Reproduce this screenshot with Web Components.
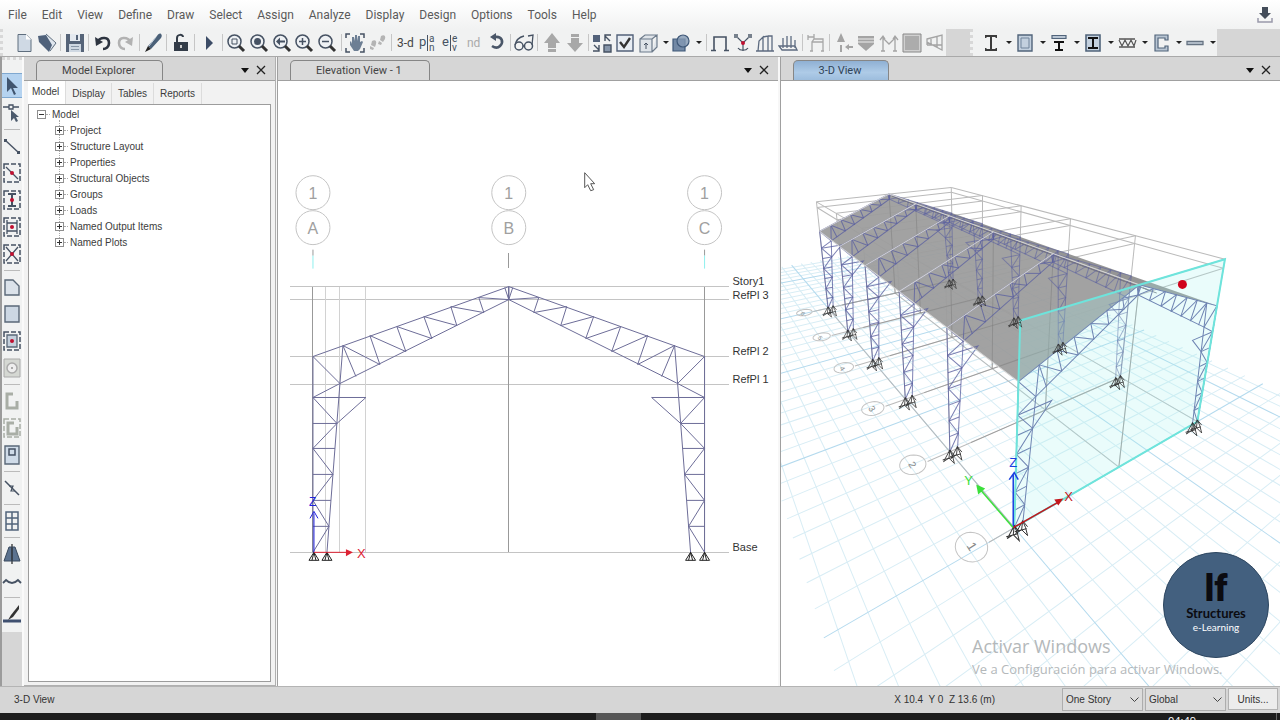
<!DOCTYPE html>
<html lang="en">
<head>
<meta charset="utf-8">
<title>Structural modeler</title>
<style>
html,body{margin:0;height:100%;background:#d6d6d6}
body{font-family:Roboto,"Liberation Sans",sans-serif;font-size:11px;color:#444;overflow:hidden}
</style>
</head>
<body>
<model-app></model-app>
<script>
const BASE = `*{box-sizing:border-box}button,select{font:inherit;color:inherit;margin:0;padding:0;border:0;background:none;border-radius:0}`;
function define(name, css, html) {
  const t = document.createElement('template');
  customElements.define(name, class extends HTMLElement {
    constructor() {
      super();
      this.attachShadow({ mode: 'open' });
    }
    connectedCallback() {
      if (this.shadowRoot.childNodes.length) return;
      t.innerHTML = `<style>${BASE}${css}</style>${typeof html === 'function' ? html(this) : html}`;
      this.shadowRoot.append(t.content.cloneNode(true));
    }
  });
}

/* ---------- icons, 20 x 20 ---------- */
const D = '#465263', M = '#9fb0c2', G = '#a8a8a8';
const s = (d, c = D, w = 1.5, f = 'none') => `<path d="${d}" fill="${f}" stroke="${c}" stroke-width="${w}"/>`;
const f = (d, c = D) => `<path d="${d}" fill="${c}"/>`;
const txt = (x, y, t, z = 12, c = D) => `<text x="${x}" y="${y}" font-size="${z}" fill="${c}">${t}</text>`;
const lens = `<circle cx="8.5" cy="8.5" r="6.5" fill="#eef1f4" stroke="${D}" stroke-width="1.5"/>` + s('M13 13l5 5', '#333', 3);
const dash = `<rect x="2" y="1" width="16" height="18" fill="none" stroke="${D}" stroke-width="1.5" stroke-dasharray="5 2"/>`;
const red = `<circle cx="10" cy="10" r="2" fill="#c01030"/>`;
const ICONS = {
  new: s('M4 1.5h8l5 5V18.5H4z', '#5f6e7e', 1, '#cfd9e4') + f('M12 1.5v5h5z', '#fff'),
  open: f('M1 3l9-2 9 10-6 8z', '#dfe6ee') + f('M1 3l8-1 6 10-3 7L2 9z', '#4f617a') + s('M9 1l10 9-6 8', '#5f6e7e', 1),
  save: f('M1 1h18v18H1z', '#566478') + f('M5 1h10v7H5z', '#e5eaf0') + f('M11 2h2v5h-2z', '#566478') + f('M4 11h12v8H4z', '#cfd8e2') + s('M6 13.5h8M6 16.5h8', '#8896a6', 1),
  undo: s('M4 9c4-6 12-5 12 1 0 4-3 6-6 6', '#2d3440', 2.6) + f('M2 4l1 9 7-4z', '#2d3440'),
  redo: s('M16 9c-4-6-12-5-12 1 0 4 3 6 6 6', '#b2b2b2', 2.6) + f('M18 4l-1 9-7-4z', '#b2b2b2'),
  pencil: f('M18 1c1 1 1 2 0 4L8 16l-3-3L14 3c1-2 3-3 4-2z', '#4a6078') + f('M5 13l3 3-6 3z', '#222') + s('M13 4L6 13', '#c4d0dc', 1),
  lock: f('M3 9h14v9H3z', '#333c48') + s('M6 9V5c0-4 6-4 6-1', '#333c48', 2) + f('M9 12h2v3H9z', '#ccc'),
  play: f('M7 3l7 7-7 7z', '#3c4c66'),
  zfit: lens + s('M6 6h5v5H6z', D, 1),
  zwin: lens + `<circle cx="8.5" cy="8.5" r="3.5" fill="${D}"/>`,
  zback: lens + f('M4 8.5l4-4v3h5v2H8v3z'),
  zin: lens + s('M5 8.5h7M8.5 5v7'),
  zout: lens + s('M5 8.5h7'),
  pan: s('M1 5V1h4M15 1h4v4M19 15v4h-4M5 19H1v-4') + f('M5 9l1-1 1 3V4h2l1 4V2h2v6l1-5h2v6l2-1 1 1-3 7-2 2H9l-4-6z', '#6d7f94'),
  walk: f('M13 3c3-2 5 0 4 3l-2 3-3-2zM11 8l3 2-1 2-3-1zM4 8c3-2 5 0 4 3l-1 3-4-2zM2 13l4 2-1 2-3-1z', '#b4b4b4'),
  plan: txt(1, 13, 'p', 13) + s('M9.5 2v16', D, 1) + txt(11, 9, 'a', 10) + txt(11, 18, 'n', 10),
  elev: txt(1, 13, 'e', 13) + s('M9.5 2v16', D, 1) + txt(11, 9, 'e', 10) + txt(11, 18, 'v', 10),
  rot: s('M9 4c7-1 9 5 5 9-2 2-5 2-8 0', '#4a5668', 2.6) + f('M10 0v8L4 4z', '#4a5668'),
  glass: `<circle cx="5" cy="13" r="4" fill="none" stroke="${D}" stroke-width="1.5"/><circle cx="14.5" cy="13" r="4" fill="none" stroke="${D}" stroke-width="1.5"/>` + s('M1 12C2 7 6 4 10 3M9 13h2M18 12l1-10-5 1', D, 1.3),
  up: f('M10 0l8 10h-4v5H6v-5H2zM6 16h8v3H6z', G),
  down: f('M10 19l8-9h-4V5H6v5H2zM6 1h8v3H6z', G),
  quad: f('M1 2h7v7H1z', '#53627a') + f('M12 12h7v7h-7z', '#8796aa') + s('M12 12h7v7h-7zM18 8l-5-5M13 8V2h6M2 12l5 5M7 12v6H1', D, 1.4),
  check: s('M2 2h16v16H2z', '#53627a', 1.4, '#e8edf3') + s('M5 9l4 5 6-9', '#333', 2.4),
  cube: s('M2 6h12v13H2zM2 6l5-4h12l-5 4M19 2v12l-5 5', '#6d7b8b', 1.2, '#dfe4e9') + s('M8 10v6M6 12l2-2 2 2', D, 1),
  solid: s('M2 6h12v12H2z', '#3f5878', 1.2, '#7389a5') + `<circle cx="12" cy="8" r="6" fill="#8399b3" fill-opacity=".8" stroke="#3f5878" stroke-width="1.2"/>`,
  portal: s('M4 17V4h12v13', D, 1.6) + s('M1 17.5h5M14 17.5h5', D, 1.4),
  joint: s('M3 3l7 7 7-7M10 10v8M5 15c2 3 8 3 10 0', D, 1.2) + f('M1 1h4v4H1zM15 1h4v4h-4z', '#77818d') + red,
  load1: s('M1 18h18M3 18l1-10 4-4v14M8 4l5-1v15M13 3h4v15', '#5d6b80', 1.3),
  load2: s('M1 13h16l2 4H4zM5 15V5M9 15V3M13 15V3M17 15V7', '#5d6b80', 1.3),
  dframe: s('M6 18V9h11v9M2 2v5M2 4h6M8 1v5M6 9l2-3h9v12M4 18h3M15 18h3', G, 1.3),
  dcone: f('M7 0l4 9H3zM6 12h2v7H6zM11 14l4-3v6zM14 13h5v2h-5z', '#a4a4a4'),
  dshield: f('M2 3h16v8l-8 7-8-7z', '#a4a4a4') + s('M2 6h16M2 9h16', '#eee', 1),
  dmom: s('M4 18V5l6 6 6-6v13M1 7l3-4 2 3M19 7l-3-4-2 3M2 18h4M14 18h4', '#a4a4a4', 1.3),
  dplate: s('M1 1h18v18H1z', '#888', 1, '#d0d0d0') + f('M3 3h14v14H3z', '#acacac'),
  dmesh: s('M2 6l15-4v15L2 9zM2 12h15M2 6v6M6 5v6M12 4v10', '#a4a4a4', 1.3),
  ibeam: f('M4 2h12v3h-1l-1-1h-3v12h3l1-1h1v3H4v-3h1l1 1h3V4H6L5 5H4z', '#3c3c3c'),
  plate: s('M3 2h14v16H3z', '#51647b', 1.4, '#c3d0de') + s('M6 5h8v10H6z', '#71849b', 1),
  tee: s('M3 2.5h14v3H3z', '#51647b', 1.2, '#b8c5d3') + f('M5 8h10v2h-4v6h3v2H6v-2h3v-6H5z', '#111'),
  boxi: s('M3 2h14v16H3z', '#51647b', 1.6, '#c3d0de') + f('M5 4h10v2h-4v8h4v2H5v-2h4V6H5z', '#111'),
  truss: s('M2 6h16M2 14h16', '#555', 1.4) + s('M2 7l3 6 3-6 3 6 3-6 3 6 2-6', '#555', 1.2),
  chan: s('M17 2v5h-3V5H7v10h7v-2h3v5H4V2z', '#51647b', 1.2, '#b8c5d3'),
  bar: s('M2 8.5h16v3H2z', '#667382', 1.3, '#c9d2dc'),
  arrow: f('M5 1v15l4-4 3 7 2-1-3-6h5z', '#41556f'),
  reshape: s('M1 4h6M11 4h6M7 2h4v4H7z', D, 1.3) + f('M9 7v11l3-3 2 4 2-1-2-4h3z', '#4c5b6d'),
  line: s('M3 4l14 13', D, 1.4) + f('M2 3h3v3H2zM15 15h3v3h-3z'),
  qline: dash + s('M4 4l12 12', D, 1.3) + red,
  qcol: dash + s('M6 4h8M10 4v12M6 16h8', D, 2) + red,
  qbeam: dash + s('M5 3v14M15 3v14M5 6h10M5 14h10', D, 1.3) + red,
  qbrace: dash + s('M4 3l12 14M16 3L4 17', D, 1.3) + red,
  poly: s('M3 3h8l6 6v9H3z', '#5a6878', 1.4, '#dbe2ea'),
  rect: s('M3 2h14v16H3z', '#5a6878', 1.4, '#ccd7e3'),
  qrect: dash + s('M5 4h10v12H5z', '#5a6878', 1.3, '#c5d0dc') + red,
  dcirc: s('M2 1h16v18H2z', '#aaa', 1, '#d5d8d3') + `<circle cx="10" cy="10" r="5" fill="#eee" stroke="#aaa" stroke-width="1.5"/>` + f('M9 9h2v2H9z', '#aaa'),
  wall: s('M11 3H5v14h10V10', '#a9aea6', 3),
  qwall: `<rect x="2" y="1" width="16" height="18" fill="none" stroke="#a9aea6" stroke-width="1.5" stroke-dasharray="5 2"/>` + s('M12 5H6v11h9v-7', '#a9aea6', 3),
  open2: s('M3 1h14v18H3z', '#5a6878', 1.4, '#cfdbe8') + s('M7 4h6v6H7z', D, 1.5),
  link: s('M3 3l14 14', D, 1.5) + s('M7 8h4l-2 5h4', D, 1.2),
  grid: s('M4 1h12v18H4zM10 1v18M4 7h12M4 13h12', '#51647b', 1.5),
  tower: f('M7 3h6l5 14H2z', '#5c7390') + s('M10 0v20', '#222', 1.2) + s('M7 3h6l5 14H2z', '#38485c', 1),
  tendon: s('M1 12l3-3c4 4 8 4 12 0l3 3', D, 1.8),
  draw: s('M1 17h18', '#3f5070', 3) + f('M17 1L9 11l-3 5 5-3 6-8z', '#333'),
};
define('ui-icon', `:host{display:block;width:20px;height:20px}svg{display:block;width:100%;height:100%;font-family:Roboto,sans-serif}`,
  el => `<svg viewBox="0 0 20 20" aria-hidden="true">${ICONS[el.getAttribute('name')] || ''}</svg>`);

define('tool-button', `:host{display:flex;flex:0 1 23px;min-width:0;align-items:center;justify-content:center}
:host([drop]){flex-basis:34px}
:host([text]) button{font-size:12px}
:host([dim]){color:#aaa}
button{width:100%;height:100%;display:flex;align-items:center;justify-content:center;gap:5px;white-space:nowrap}
.d{width:0;height:0;border:3px solid transparent;border-top-color:#222;border-bottom:0}
:host([on]) button{background:#b5d3f0;border-top:1px solid #7fa8d0;border-bottom:1px solid #7fa8d0}`,
  el => `<button aria-label="${el.getAttribute('label') || el.getAttribute('icon')}">${el.hasAttribute('text') ? '<slot></slot>' : `<ui-icon name="${el.getAttribute('icon')}"></ui-icon>`}${el.hasAttribute('drop') ? '<span class="d"></span>' : ''}</button>`);

define('menu-bar', `:host{display:flex;justify-content:space-between;align-items:center;height:29px;padding:0 7px 0 8px;background:linear-gradient(#fff,#f1f2f2)}
nav{display:flex;gap:15px;font-size:12px;color:#5a5a5a}svg{width:16px;height:18px;display:block}`,
  `<nav>${'File,Edit,View,Define,Draw,Select,Assign,Analyze,Display,Design,Options,Tools,Help'.split(',').map(m => `<button>${m}</button>`).join('')}</nav>
  <button aria-label="Download"><svg viewBox="0 0 16 18"><path d="M5 1h6v6h3l-6 6-6-6h3z" fill="#444d5a"/><path d="M1 12v4h14v-4" fill="none" stroke="#99a" stroke-width="1.5"/></svg></button>`);

const bar = list => list.trim().split(/\s+/).map(n => {
  if (n === '|') return '<i></i>';
  if (n === '3-d') return '<tool-button text label="3-D view">3-d</tool-button>';
  if (n === 'nd') return '<tool-button text dim label="nd">nd</tool-button>';
  return n.endsWith('+') ? `<tool-button drop icon="${n.slice(0, -1)}"></tool-button>` : `<tool-button icon="${n}"></tool-button>`;
}).join('');
define('tool-bars', `:host{display:flex;height:28px;gap:24px;background:#d6d6d6;border-bottom:1px solid #a9a9a9}
div{display:flex;min-width:0;background:#f1f2f2}
.a{flex:0 1 946px}.b{flex:0 1 247px}
.a::before,.b::before{content:"";flex:0 0 10px;border-left:3px dotted #d8d8d8}
.b::before{flex-basis:6px}
i{flex:0 0 1px;margin:5px 2px;background:#c6c6c6}`,
  `<div class="a" role="toolbar" aria-label="Main">${bar('new open | save | undo redo | pencil | lock | play | zfit zwin zback zin zout | pan walk | 3-d plan elev nd rot | glass | up down | quad check cube+ solid+ | portal joint load1 load2 | dframe | dcone dshield dmom dplate dmesh')}</div>
   <div class="b" role="toolbar" aria-label="Sections">${bar('ibeam+ plate+ tee+ boxi+ truss+ chan+ bar+')}</div>`);

define('draw-bar', `:host{display:block;flex:0 0 24px;background:#d6d6d6;border-left:2px solid #9b9b9b;border-right:2px solid #fafafa}
div{background:#f1f2f2;display:flex;flex-direction:column;padding-bottom:5px}
div::before{content:"";height:12px;border-top:3px dotted #d8d8d8}
tool-button{flex:0 0 27px;padding:1px 0}
i{flex:0 0 1px;margin:3px 2px 2px;background:#bbb}`,
  `<div role="toolbar" aria-label="Draw">${bar('arrow reshape | line qline qcol qbeam qbrace | poly rect qrect dcirc | wall qwall open2 | link | grid | tower tendon | draw').replace('<tool-button', '<tool-button on')}</div>`);

define('view-pane', `:host{display:flex;flex-direction:column;min-width:0;min-height:0;background:#fff}
header{flex:0 0 24px;display:flex;align-items:flex-end;background:#d6d6d6;border-bottom:1px solid #a0a0a0}
h2{margin:0 0 0 12px;height:20px;line-height:19px;padding:0 27px 0 25px;font-size:11px;font-weight:400;color:#444;background:#dadada;border:1px solid #868686;border-bottom:0;border-radius:5px 5px 0 0}
:host([active]) h2{background:linear-gradient(#8fb0d3,#aecbe7 60%,#9dbddd);color:#2f4256}
span{flex:1}
button{width:16px;height:20px;display:flex;align-items:center;justify-content:center}
button:last-child{margin-right:6px}
svg{display:block;width:10px;height:10px}
main{flex:1;min-height:0;position:relative;display:flex;flex-direction:column}`,
  el => `<header><h2>${el.getAttribute('title')}</h2><span></span>
  <button aria-label="Options"><svg viewBox="0 0 10 10"><path d="M1 3h8L5 8z" fill="#111"/></svg></button>
  <button aria-label="Close"><svg viewBox="0 0 10 10"><path d="M1 1l8 8M9 1L1 9" stroke="#222" stroke-width="1.3"/></svg></button></header><main><slot></slot></main>`);

define('model-tree', `:host{flex:1;display:flex;flex-direction:column;background:#f2f2f2;padding:0 4px 3px;font:10px "Liberation Sans",sans-serif;color:#3c3c3c}
nav{display:flex;height:23px;align-items:flex-end}
nav button{height:21px;padding:0 6px;border-right:1px solid #dcdcdc}
nav button:first-child{background:#fff;height:23px;padding:0 6px 3px 4px}
section{flex:1;background:#fff;border:1px solid #9c9c9c;padding:1px 8px}
ul{list-style:none;margin:0;padding:0}
ul ul{margin-left:18px;position:relative}
ul ul::before{content:"";position:absolute;left:4px;top:-2px;height:122px;border-left:1px dotted #aaa}
li div{display:flex;align-items:center;height:16px;position:relative}
li button{width:9px;height:9px;border:1px solid #8f8f8f;background:#fff;display:block}
svg{display:block;width:7px;height:7px}
li span{display:flex;align-items:center}
li span::before{content:"";width:4px;margin:0 2px 0 0;border-top:1px dotted #aaa}`,
  () => {
    const row = (t, open) => `<div><button aria-label="Toggle ${t}"><svg viewBox="0 0 7 7"><path d="${open ? 'M1 3.5h5' : 'M1 3.5h5M3.5 1v5'}" stroke="#333"/></svg></button><span>${t}</span></div>`;
    return `<nav>${['Model', 'Display', 'Tables', 'Reports'].map(t => `<button>${t}</button>`).join('')}</nav><section><ul><li>${row('Model', true)}<ul>${
      ['Project', 'Structure Layout', 'Properties', 'Structural Objects', 'Groups', 'Loads', 'Named Output Items', 'Named Plots'].map(t => `<li>${row(t)}</li>`).join('')}</ul></li></ul></section>`;
  });

/* ---------- portal frame, in elevation drawing units ---------- */
const CX = 509, X0 = 313, X1 = 705, ZB = 553, ZT = 287;
const T = [[343, 346], [370, 336], [397, 327], [424, 317], [451, 307], [479, 298]];
const B = [[356, 377], [380, 365], [406, 352], [432, 339], [457, 326], [484, 313]];
const half = [
  [[X0, ZB], [X0, 357], [CX, ZT]],
  [[327, ZB], [340, 384], [343, 346]],
  [[X0, 398], [340, 384], [CX, 300], [CX, ZT]],
  [[X0, 357], [340, 384]],
  [[X0, 398], [366, 398], [337, 424], [X0, 398]],
  [[337, 424], [X0, 449], [333, 475], [X0, 501], [329, 527], [X0, ZB]],
  [[X0, 424], [337, 424]], [[X0, 449], [335, 449]], [[X0, 475], [333, 475]], [[X0, 501], [331, 501]], [[X0, 527], [329, 527]],
  [[505, 288], [CX, 300]],
  ...T.map((p, i) => [p, B[i]]),
  ...T.map((p, i) => [p, B[i + 1] || [CX, 300]]),
];
const mirror = l => l.map(([x, y]) => [2 * CX - x, y]);
const poly = (pts, extra = '') => `<polyline points="${pts.map(p => p.map(n => n.toFixed(1)).join()).join(' ')}" ${extra}/>`;

define('elevation-canvas', `:host{flex:1;min-height:0;display:block}svg{display:block;width:100%;height:100%;font-family:"Liberation Sans",sans-serif}`, () => {
  const ln = (a, b, c, d) => `<path d="M${a} ${b}L${c} ${d}"/>`;
  let g = '';
  for (const y of [287, 300, 357, 385, 553]) g += ln(290, y, 729, y);
  let v = '';
  for (const x of [326, 340, 366]) v += ln(x, 287, x, 553);
  const dk = ln(X0, 287, X0, 553) + ln(CX, 253, CX, 268) + ln(CX, 287, CX, 553) + ln(X1, 287, X1, 553);
  let bub = '';
  [[X0, 'A'], [CX, 'B'], [X1, 'C']].forEach(([x, t]) => {
    bub += `<circle cx="${x}" cy="193" r="17"/><circle cx="${x}" cy="228" r="17"/><text x="${x}" y="199">1</text><text x="${x}" y="234">${t}</text>`;
  });
  const sup = x => `<path d="M${x} 553l-5 8h10zM${x - 2} 561l2-8 2 8"/>`;
  return `<svg viewBox="278 82 500 604" preserveAspectRatio="xMidYMid meet" role="img" aria-label="Elevation of portal frame">
  <g stroke="#c4c4c4" fill="none" shape-rendering="crispEdges">${g}</g><g stroke="#d2d2d2" shape-rendering="crispEdges">${v}</g>
  <g stroke="#999" shape-rendering="crispEdges">${dk}</g>
  <path d="M313 250v6M705 250v6" stroke="#999"/><path d="M313 256v13M705 256v13" stroke="#8ff0ee"/>
  <g stroke="#c4c4c4" fill="none">${bub.replace(/<text/g, '<text fill="#a0a0a0" stroke="none" font-size="16" text-anchor="middle"')}</g>
  <g stroke="#6c6c98" fill="none">${half.map(l => poly(l) + poly(mirror(l))).join('')}</g>
  <g stroke="#222" fill="none">${[314, 327, 691, 705].map(sup).join('')}</g>
  <path d="M314 553V514M310 519l4-7 4 7" stroke="#2222dd" fill="none"/><path d="M314 553h34" stroke="#d23" fill="none"/><path d="M346 550l7 3-7 4z" fill="#d23"/>
  <text x="309" y="507" font-size="12" fill="#2222dd">Z</text><text x="357" y="559" font-size="13" fill="#d23">X</text>
  <g font-size="11" fill="#333"><text x="733" y="285">Story1</text><text x="733" y="299">RefPl 3</text><text x="733" y="355">RefPl 2</text><text x="733" y="384">RefPl 1</text><text x="733" y="552">Base</text></g>
  <path d="M585 173v15l3-3 3 6 3-1-3-6h4z" fill="#fff" stroke="#555"/></svg>`;
});

/* ---------- perspective view ---------- */
/* x, y, z run 0..1 over the span, the length and the storey height */
const P = (x, y, z) => {
  const w = 1 + 0.332 * x + 1.114 * y - 0.15 * z;
  return [(1014 + 580.3 * x + 736.4 * y - 147 * z) / w, (527 + 33.9 * x + 123.7 * y - 255 * z) / w, w];
};
const pl = pts => poly(pts.map(p => P(...p).slice(0, 2)));
const area = (pts, extra) => `<polygon points="${pts.map(p => P(...p).slice(0, 2).map(n => n.toFixed(1)).join()).join(' ')}" ${extra}/>`;

define('space-canvas', `:host{flex:1;min-height:0;display:block}svg{display:block;width:100%;height:100%;font-family:"Liberation Sans",sans-serif}`, () => {
  const unit = ([x, z]) => [(x - X0) / (X1 - X0), (ZB - z) / (ZB - ZT)];
  const frame = (y, lines) => lines.map(l => pl(l.map(p => { const [a, b] = unit(p); return [a, y, b]; }))).join('');
  const eave = (ZB - 357) / (ZB - ZT);
  let minor = '', major = '';
  for (let i = -7; i <= 18; i++) { const t = pl([[i / 12, -.5, 0], [i / 12, 1.53, 0]]); i % 8 ? minor += t : major += t; }
  for (let j = -12; j <= 36; j++) { const t = pl([[-.62, j / 24, 0], [1.54, j / 24, 0]]); j % 8 ? minor += t : major += t; }
  const Y = [0, .2, .4, .6, .8, 1];
  let lines = '', sup = '', bub = '', cols = '', caps = '';
  for (const x of [0, .5, 1]) lines += pl([[x, 0, 0], [x, 1, 0]]);
  for (const x of [0, 1]) for (const z of [1, .95]) lines += pl([[x, 0, z], [x, 1, z]]);
  Y.forEach((y, i) => {
    lines += pl([[-.1, y, 0], [1, y, 0]]) + pl([[0, y, 1], [1, y, 1]]) + pl([[0, y, .95], [1, y, .95]]);
    for (const x of [0, .5, 1]) lines += pl([[x, y, 0], [x, y, 1]]);
    for (const x of [0, .035, .965, 1]) {
      const [a, b, w] = P(x, y, 0), k = 1 / Math.sqrt(w);
      sup += `<path transform="translate(${a.toFixed(1)} ${b.toFixed(1)}) scale(${k.toFixed(2)})" d="M0-2l-7 13 6-4 6 6-2-8zM0-2l-1 9M-8 9l12-3M0-2l5 6"/>`;
    }
    const ring = [], cy = y + .008;
    for (let a = 0; a <= 24; a++) ring.push([-.155 + .05 * Math.cos(a * Math.PI / 12), cy + .025 * Math.sin(a * Math.PI / 12), 0]);
    bub += pl(ring);
    const [bx, by, bw] = P(-.155, cy, 0);
    bub += `<text x="0" y="4" text-anchor="middle" font-size="${Math.round(12 / bw)}" fill="#888" stroke="none" transform="translate(${bx.toFixed(1)} ${by.toFixed(1)}) rotate(58)">${i + 1}</text>`;
    cols += `<g stroke-opacity="${i ? .8 : 1}">${frame(y, half)}</g><g stroke-opacity="${i ? .6 : 1}">${frame(y, half.map(mirror))}</g>`;
    if (i) caps += pl([[0, y, eave], [.5, y, 1]]);
  });
  let ribs = '';
  for (let i = 0; i <= 60; i++) ribs += pl([[.52, i / 60, .98], [.6, i / 60, .93]]);
  return `<svg viewBox="781 81 499 604" preserveAspectRatio="xMidYMid meet" role="img" aria-label="Perspective of the building">
  <g fill="none" stroke="#d8edf5">${minor}</g><g fill="none" stroke="#b4daee">${major}</g>
  <g fill="none" stroke="#bababa">${lines}</g><g fill="none" stroke="#c4c4c4">${bub}</g>
  ${area([[.5, 0, 1], [.5, 1, 1], [1, 1, eave], [1, 0, eave]], 'fill="#8a8a8a" fill-opacity=".9"')}
  ${area([[0, 0, eave], [0, 1, eave], [.5, 1, 1], [.5, 0, 1]], 'fill="#9c9c9c" fill-opacity=".94"')}
  <g fill="none" stroke="#777784">${ribs}</g>
  <g fill="none" stroke="#808080" stroke-opacity=".5">${Y.map(y => pl([[.5, y, 0], [.5, y, 1]])).join('')}${Y.slice(1).map(y => pl([[0.1, y, 0], [1, y, 0]])).join('')}</g>
  <g fill="none" stroke="#5d62a0">${cols}</g>
  <g fill="none" stroke="#d4d4d4">${caps}${pl([[.5, 0, 1], [.5, 1, 1]])}${pl([[0, 0, eave], [0, 1, eave]])}</g>
  ${area([[0, 0, 0], [1, 0, 0], [1, 0, 1], [0, 0, 1]], 'fill="#a9f2ee" fill-opacity=".24" stroke="#6ee4dc" stroke-width="2"')}
  <g fill="none" stroke="#333">${sup}</g>
  <circle cx="1182" cy="284" r="4.5" fill="#d0021b"/>
  <path d="M1013 527V474M1009 479l5-7 4 7" stroke="#1b3fe0" fill="none" stroke-width="1.5"/>
  <path d="M1013 527L980 489" stroke="#3be03b" fill="none" stroke-width="1.5"/><path d="M976 484l9 4-7 6z" fill="#3be03b"/>
  <path d="M1013 527l46-26" stroke="#c4161c" fill="none" stroke-width="1.5"/><path d="M1063 498l-9 1 4 6z" fill="#c4161c"/>
  <g font-size="13"><text x="1009" y="466" fill="#1b3fe0">Z</text><text x="964" y="484" fill="#3be03b">Y</text><text x="1064" y="500" fill="#c4161c">X</text></g></svg>`;
});

define('activation-note', `:host{position:absolute;right:48px;bottom:7px;width:260px;font-family:"Open Sans",sans-serif;color:#b4b8ba}
p{margin:0;white-space:nowrap}p:first-of-type{font-size:18px;line-height:25px}p:last-child{font-size:13px;line-height:20px}`,
  `<p>Activar Windows</p><p>Ve a Configuración para activar Windows.</p>`);
define('brand-badge', `:host{position:absolute;right:11px;bottom:28px;width:106px;height:106px;border-radius:50%;background:#43607f;border:1px solid #2d4660;display:flex;flex-direction:column;align-items:center;font-family:Lato,sans-serif;color:#0b0b10}
b{font:900 36px/32px Roboto,sans-serif;margin-top:20px}strong{font-size:13px;line-height:17px}small{font-size:10px;line-height:10px;color:#fff}`,
  `<b>lf</b><strong>Structures</strong><small>e-Learning</small>`);

define('status-bar', `:host{display:flex;align-items:center;height:27px;padding:0 2px 2px 14px;background:#d6d6d6;border-top:1px solid #b4b4b4;font:10px "Liberation Sans",sans-serif;color:#333}
.s{flex:1}.c{margin-right:67px;white-space:pre}
label{position:relative;display:block;margin-right:2px}
select{appearance:none;width:81px;height:23px;padding:0 3px;border:1px solid #adadad;background:#dcdcdc;display:block}
svg{position:absolute;right:4px;top:9px;width:9px;height:6px;pointer-events:none}
button{width:50px;height:22px;background:#ececec;border:1px solid #b2b2b2}`,
  `<span class="s">3-D View</span><output class="c">X 10.4  Y 0  Z 13.6 (m)</output>
  ${[['Story scope', 'One Story'], ['Coordinate system', 'Global']].map(([l, v]) => `<label><select aria-label="${l}"><option>${v}</option></select><svg viewBox="0 0 9 6"><path d="M0.5 0.5l4 4 4-4" fill="none" stroke="#444"/></svg></label>`).join('')}
  <button>Units...</button>`);

define('task-bar', `:host{display:flex;justify-content:flex-end;height:7px;background:#1d1d1d;overflow:hidden;position:relative}
i{position:absolute;left:calc(50% - 44px);width:45px;height:7px;background:#565656}
time{font:11px/12px "Open Sans",sans-serif;color:#fff;margin-right:84px;padding-top:2px}
span{position:absolute;right:3px;height:7px;border-left:1px solid #666}`, `<i></i><time>04:49</time><span></span>`);

define('model-app', `:host{display:flex;flex-direction:column;height:100vh}
.w{flex:1;min-height:0;display:flex;background:#f7f7f7}
.m{flex:0 0 252px;border:solid #b0b0b0;border-width:0 1px 1px 0;margin-right:1px}
.e,.t{flex:1 1 0;border-left:1px solid #a0a0a0}.e{margin-right:2px}`,
  `<menu-bar></menu-bar><tool-bars></tool-bars>
  <div class="w"><draw-bar></draw-bar>
  <view-pane class="m" title="Model Explorer"><model-tree></model-tree></view-pane>
  <view-pane class="e" title="Elevation View - 1"><elevation-canvas></elevation-canvas></view-pane>
  <view-pane class="t" title="3-D View" active><space-canvas></space-canvas><activation-note></activation-note><brand-badge></brand-badge></view-pane></div>
  <status-bar></status-bar><task-bar></task-bar>`);
</script>
</body>
</html>
